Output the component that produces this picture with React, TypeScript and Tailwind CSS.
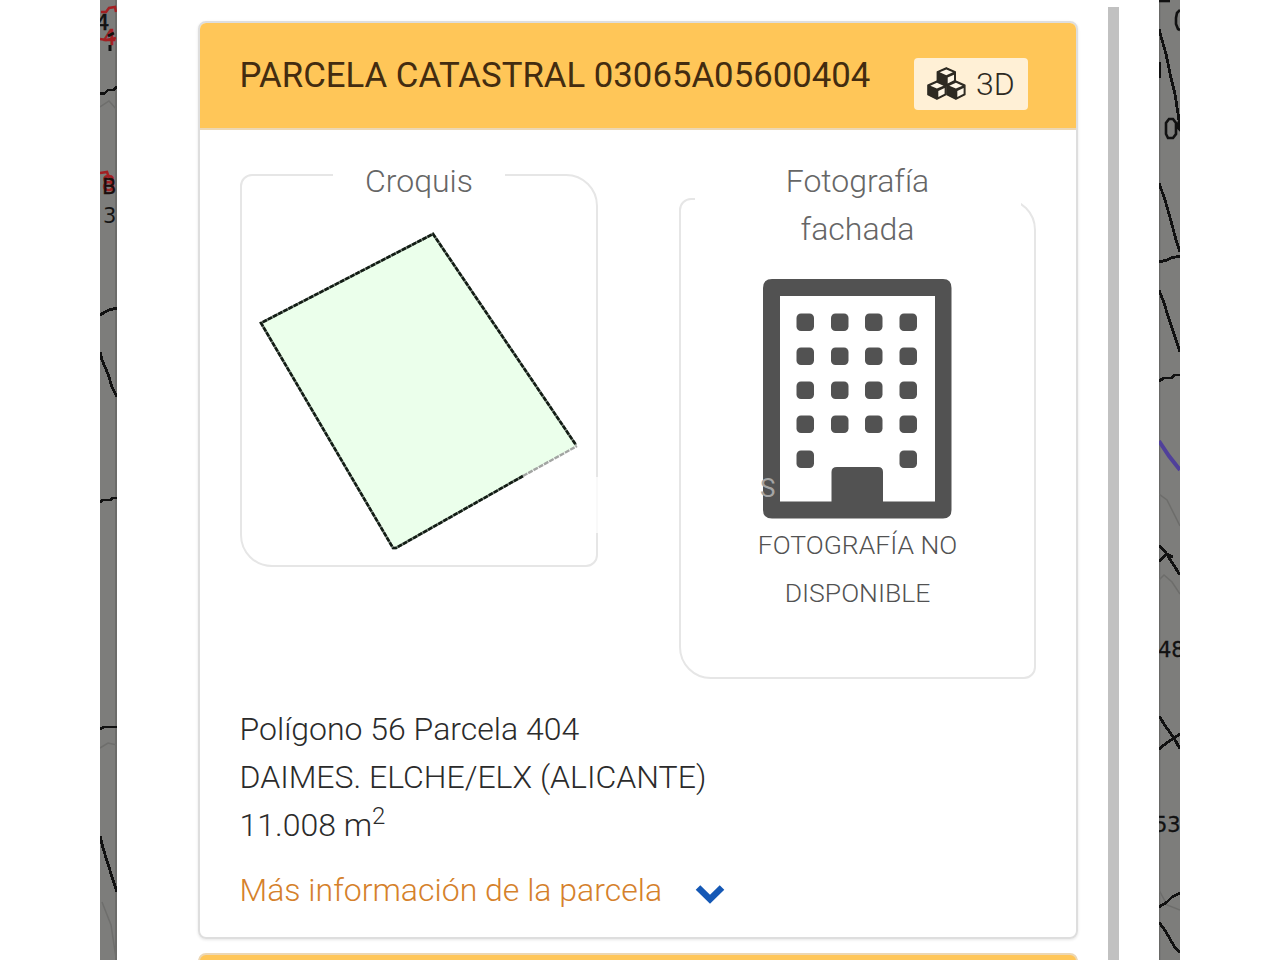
const mapText = "font-['DejaVu_Sans'] text-[21px] font-normal";

function LeftMap() {
  return (
    <svg className="h-[960px] w-[17px] shrink-0 bg-[#7d7d7b]" viewBox="0 0 17 960" fill="none">
      <path d="M16 0V960" stroke="#6c6c6a" strokeWidth="2" />
      <path d="M0 107L9 101L17 110M0 748L8 743L17 745M2 902L11 925L16 958" stroke="#6e6e6c" strokeWidth="1.5" />
      <g className={mapText}>
        <text x="-4" y="30" fill="#111" stroke="#111" strokeWidth="0.600">4</text>
        <text x="3" y="45" fill="#a31f22" stroke="#a31f22" strokeWidth="0.600">4</text>
        <text x="2" y="191" fill="#a31f22" stroke="#a31f22" strokeWidth="0.600">8</text>
        <text x="2" y="194" fill="#1a0d0d" stroke="#1a0d0d" strokeWidth="0.300">B</text>
        <text x="3" y="223" fill="#151515">3</text>
      </g>
      <path d="M1 12H6L9 8L15 7L16 12M0 39L6 40L16 38M0 173L7 172L9 178" stroke="#a31f22" strokeWidth="2.5" />
      <path d="M10 45V51M8 36L14 33" stroke="#111" strokeWidth="3" />
      <g stroke="#111" strokeWidth="2.8" shapeRendering="crispEdges">
        <path d="M0 94L5 93L8 90L13 90L17 87" />
        <path d="M0 315L5 312L9 310L17 308" />
        <path d="M0 352L2 360L8 374L12 387L17 397" />
        <path d="M0 502L3 500L10 500L13 498H17" />
        <path d="M0 729L4 727H17" />
        <path d="M0 836L3 848L8 864L13 880L17 892" />
      </g>
    </svg>
  );
}

function RightMap() {
  return (
    <svg className="h-[960px] w-[21px] shrink-0 bg-[#7d7d7b]" viewBox="0 0 21 960" fill="none">
      <path d="M0.5 0V960" stroke="#696967" strokeWidth="1.5" />
      <path d="M0 494L8 500L21 526M0 580L5 575L13 582L21 594M0 890L8 905L21 910" stroke="#6d6d6b" strokeWidth="1.5" />
      <g stroke="#111" strokeWidth="2.6">
        <path d="M0 1H11" />
        <path d="M21 10L18 13L17 18V24L19 29L21 30" />
        <path d="M10 119H14L17 123V134L14 138H9L7 134V123Z" />
        <path d="M21 119L18 127L21 130Z" fill="#111" />
      </g>
      <g stroke="#111" strokeWidth="2.800" shapeRendering="crispEdges">
        <path d="M0 29L3 40L7 54L12 78L16 94L20 120M1 62V78" />
        <path d="M0 183L6 200L12 221L17 240L21 252M0 262L8 260L12 258L21 256" />
        <path d="M0 290L5 303L9 316L15 334L21 352M0 381L5 378L12 378L16 375H21" />
        <path d="M0 545L7 553L14 564L21 575M0 561L8 554L14 557" />
        <path d="M0 716L7 727L15 738L21 749M0 749L9 742L21 734" />
        <path d="M0 907L8 902L13 897L21 893M0 922L7 932L15 946L21 953" />
      </g>
      <path d="M0 441L10 456L21 470" stroke="#50409a" strokeWidth="4" />
      <g className={mapText} fill="#111" stroke="#111" strokeWidth="0.300">
        <text x="-1" y="657">48</text>
        <text x="-5" y="832">53</text>
      </g>
    </svg>
  );
}

const cubeOrigins = [
  [19.3, 0.8],
  [9.9, 14.2],
  [28.9, 14.2],
];

function Cubes() {
  return (
    <svg className="h-[34px] w-[39px] shrink-0" viewBox="0 0 39 34">
      {cubeOrigins.map(([x, y]) => (
        <g key={x} transform={`translate(${x} ${y})`}>
          <path
            d="M0 0L9 4V13.500L0 18L-9 13.500V4Z"
            fill="#2e2a22"
            stroke="#2e2a22"
            strokeWidth="1.400"
            strokeLinejoin="round"
          />
          <path d="M0 1.600L6.600 4.500L0 7.400L-6.600 4.500Z" fill="#fff6e6" />
          <path d="M1.400 9.700L7.700 6.900V12.500L1.400 15.700Z" fill="#fff6e6" />
        </g>
      ))}
    </svg>
  );
}

function Sketch() {
  return (
    <svg className="h-[330px] w-[334px]" viewBox="252 226 334 330" fill="none">
      <path d="M433 234L576 446L395 548L261 323Z" fill="#ebffeb" />
      <path d="M523 476L396 548H393L261 323L433 234L576 445" stroke="#7f8a80" strokeWidth="2.6" />
      <path
        d="M523 476L396 548H393L261 323L433 234L576 445"
        stroke="#121c14"
        strokeWidth="2.6"
        strokeDasharray="4.6 1.2"
      />
      <path d="M523 476L577 446" stroke="#a3a5a3" strokeWidth="2.4" strokeDasharray="5 1" />
    </svg>
  );
}

const columns = [33.5, 68, 102, 136.5];
const rows = [34.5, 68.5, 102.5, 136.5, 171.5];

function Building() {
  return (
    <svg className="h-[240px] w-[189px]" viewBox="0 0 189 240" fill="#525252">
      <path
        fillRule="evenodd"
        d="M9 0H180Q188.500 0 188.500 9V231Q188.500 239.500 180 239.500H9Q0 239.500 0 231V9Q0 0 9 0ZM17 17V222.500H68.500V193Q68.500 188 74 188H115Q120 188 120 193V222.500H172V17Z"
      />
      {rows.map((y, r) =>
        columns.map((x, c) =>
          r === 4 && (c === 1 || c === 2) ? null : (
            <rect key={`${r}-${c}`} x={x} y={y} width="17.500" height="17.500" rx="4.500" />
          ),
        ),
      )}
    </svg>
  );
}

export default function App() {
  return (
    <div className="flex h-[960px] w-[1280px] overflow-hidden bg-white px-[100px] font-['Roboto',sans-serif] font-light">
      <LeftMap />
      <main className="flex w-[1042px] shrink-0 bg-white">
        <div className="ml-[80.500px] flex w-[880px] shrink-0 flex-col gap-[14px] pt-[20.500px]">
          <section className="h-[918px] shrink-0 overflow-hidden rounded-[8px] border-2 border-[#dedede] shadow-[0_1px_3px_rgba(0,0,0,0.1)]">
            <header className="flex h-[107px] items-start border-b-2 border-[#ecd7b4] bg-[#ffc658] pl-[40px]">
              <h1 className="w-[674.500px] shrink-0 pt-[28px] text-[34.750px] leading-[48px] font-normal whitespace-nowrap text-[#432c10]">
                PARCELA CATASTRAL 03065A05600404
              </h1>
              <button className="mt-[35px] flex h-[52px] w-[114px] items-center gap-[10px] rounded-[4px] bg-[#fff0d6] pl-[13px] text-[32px] font-light text-[#2e2a22]">
                <Cubes />
                <span>3D</span>
              </button>
            </header>
            <div className="flex items-start gap-[81px] pt-[15px] pl-[40.500px] text-[#666]">
              <fieldset className="relative h-[422px] w-[358px] rounded-tl-[12px] rounded-tr-[32px] rounded-br-[12px] rounded-bl-[32px] border-2 border-[#e6e6e6]">
                <legend className="mx-auto w-[172px] pt-[12px] text-center text-[32px] leading-[48px]">Croquis</legend>
                <div className="flex justify-center pt-[21px]">
                  <Sketch />
                </div>
                <span className="absolute top-[272px] -right-[2px] h-[56px] w-[2px] bg-white/75" />
              </fieldset>
              <fieldset className="h-[534px] w-[357px] rounded-tl-[12px] rounded-tr-[32px] rounded-br-[12px] rounded-bl-[32px] border-2 border-[#e6e6e6]">
                <legend className="mx-auto w-[326px] pt-[12px] text-center text-[32px] leading-[48px]">
                  Fotografía
                  <br />
                  fachada
                </legend>
                <div className="flex flex-col items-center pt-[26px]">
                  <div className="relative">
                    <Building />
                    <span className="absolute top-[193px] left-[-3px] text-[26px] leading-[32px] font-normal text-[#a5a5a5]">
                      S
                    </span>
                  </div>
                  <p className="pt-[2px] text-center text-[26.500px] leading-[48px] text-[#525252]">
                    FOTOGRAFÍA NO
                    <br />
                    DISPONIBLE
                  </p>
                </div>
              </fieldset>
            </div>
            <div className="pt-[26px] pl-[40px] text-[32px] leading-[48px] text-[#2b2b2b]">
              <p>Polígono 56 Parcela 404</p>
              <p>DAIMES. ELCHE/ELX (ALICANTE)</p>
              <p>
                11.008 m<sup className="text-[24px]">2</sup>
              </p>
              <a className="flex items-center gap-[33px] pt-[17px] text-[#d5812b]">
                <span>Más información de la parcela</span>
                <svg className="mt-[10px] h-[21px] w-[30px]" viewBox="0 0 30 21" fill="none">
                  <path d="M3 3.500L15 15.300L27 3.500" stroke="#1558b5" strokeWidth="6.500" />
                </svg>
              </a>
            </div>
          </section>
          <section className="h-[100px] shrink-0 rounded-[8px] border-2 border-[#ecd7b4] bg-[#ffc658]" />
        </div>
        <div className="mt-[7px] ml-[30.500px] w-[11px] bg-[#c1c1c1]" />
      </main>
      <RightMap />
    </div>
  );
}
